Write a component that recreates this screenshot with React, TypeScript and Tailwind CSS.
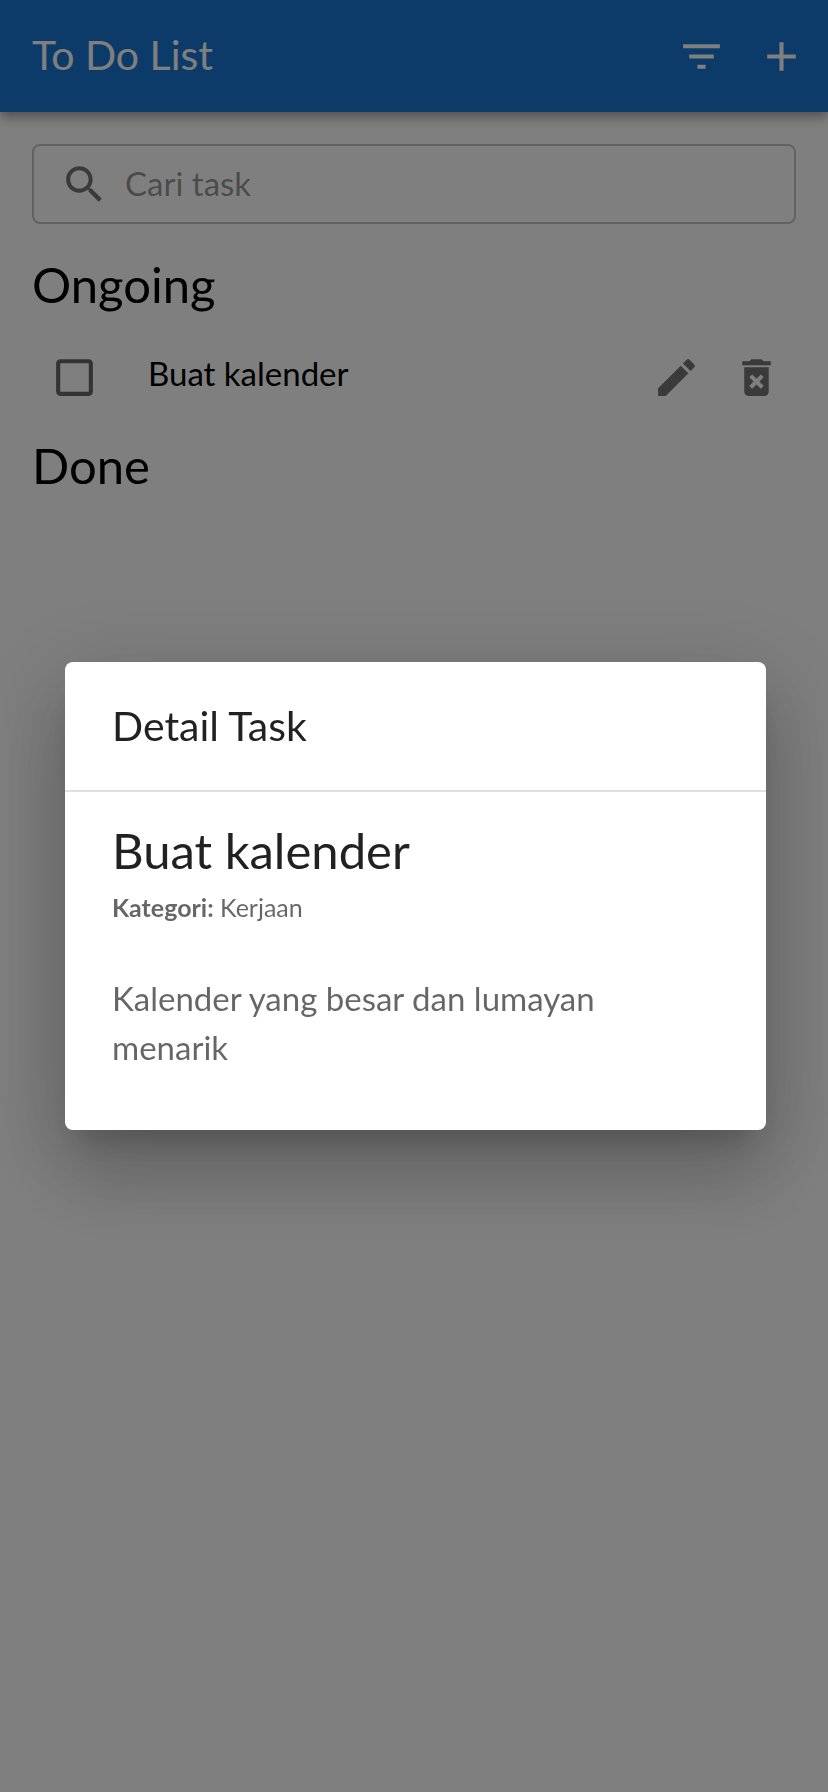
import { useState } from "react";

const icons = {
  filter: "M10 18h4v-2h-4v2zM3 6v2h18V6H3zm3 7h12v-2H6v2z",
  add: "M19 13h-6v6h-2v-6H5v-2h6V5h2v6h6v2z",
  search:
    "M15.5 14h-.79l-.28-.27C15.41 12.59 16 11.11 16 9.5 16 5.91 13.09 3 9.5 3S3 5.91 3 9.5 5.91 16 9.5 16c1.61 0 3.09-.59 4.23-1.57l.27.28v.79l5 4.99L20.49 19l-4.99-5zm-6 0C7.01 14 5 11.99 5 9.5S7.01 5 9.5 5 14 7.01 14 9.5 11.99 14 9.5 14z",
  unchecked:
    "M19 5v14H5V5h14m0-2H5c-1.1 0-2 .9-2 2v14c0 1.1.9 2 2 2h14c1.1 0 2-.9 2-2V5c0-1.1-.9-2-2-2z",
  checked:
    "M19 3H5c-1.11 0-2 .9-2 2v14c0 1.1.89 2 2 2h14c1.11 0 2-.9 2-2V5c0-1.1-.89-2-2-2zm-9 14l-5-5 1.41-1.41L10 14.17l7.59-7.59L19 8l-9 9z",
  edit: "M3 17.25V21h3.75L17.81 9.94l-3.75-3.75L3 17.25zM20.71 7.04c.39-.39.39-1.02 0-1.41l-2.34-2.34c-.39-.39-1.02-.39-1.41 0l-1.83 1.83 3.75 3.75 1.83-1.83z",
  remove:
    "M6 19c0 1.1.9 2 2 2h8c1.1 0 2-.9 2-2V7H6v12zm2.46-7.12 1.41-1.41L12 12.59l2.12-2.12 1.41 1.41L13.41 14l2.12 2.12-1.41 1.41L12 15.41l-2.12 2.12-1.41-1.41L10.59 14l-2.13-2.12zM15.5 4l-1-1h-5l-1 1H5v2h14V4z",
};

function Icon({ name, className = "" }: { name: keyof typeof icons; className?: string }) {
  return (
    <svg viewBox="0 0 24 24" fill="currentColor" aria-hidden="true" className={`size-[49px] shrink-0 ${className}`}>
      <path d={icons[name]} />
    </svg>
  );
}

function IconButton({ name, label }: { name: keyof typeof icons; label: string }) {
  return (
    <button type="button" aria-label={label} className="flex size-20 items-center justify-center rounded-full">
      <Icon name={name} />
    </button>
  );
}

export default function App() {
  const [query, setQuery] = useState("");
  const [done, setDone] = useState(false);

  return (
    <div className="min-h-screen bg-white font-['Lato',sans-serif] text-[33px] leading-[49px] text-black">
      <header className="flex h-28 items-center justify-between bg-[#1976d2] pl-8 pr-[7px] text-white shadow-[0_4px_8px_-2px_rgba(0,0,0,0.2),0_8px_10px_0_rgba(0,0,0,0.14),0_2px_20px_0_rgba(0,0,0,0.12)]">
        <h1 className="pb-1 text-[41px]">To Do List</h1>
        <div className="flex">
          <IconButton name="filter" label="Filter" />
          <IconButton name="add" label="Tambah task" />
        </div>
      </header>

      <main className="px-8 pt-8">
        <div className="flex h-20 items-center gap-4 rounded-lg border-2 border-black/23 pl-[26px] pr-7">
          <Icon name="search" className="text-black/54" />
          <input
            type="text"
            aria-label="Cari task"
            placeholder="Cari task"
            value={query}
            onChange={(e) => setQuery(e.target.value)}
            className="w-full min-w-0 bg-transparent pb-0.5 outline-none placeholder:text-black/42"
          />
        </div>

        <section>
          <h2 className="pt-7 text-[49px] leading-[65px]">Ongoing</h2>
          <ul>
            <li className="flex h-[116px] items-center pt-1">
              <label className="flex flex-1 items-center">
                <input
                  type="checkbox"
                  checked={done}
                  onChange={(e) => setDone(e.target.checked)}
                  className="sr-only"
                />
                <span className="flex size-[84px] items-center justify-center text-black/60">
                  <Icon name={done ? "checked" : "unchecked"} />
                </span>
                <span className="pb-2 pl-8">Buat kalender</span>
              </label>
              <div className="flex text-black/54">
                <IconButton name="edit" label="Edit task" />
                <IconButton name="remove" label="Hapus task" />
              </div>
            </li>
          </ul>
        </section>

        <section>
          <h2 className="text-[49px] leading-[65px]">Done</h2>
        </section>
      </main>

      <div className="fixed inset-0 flex items-center justify-center bg-black/50 pl-[65px] pr-[62px]">
        <div
          role="dialog"
          aria-modal="true"
          aria-labelledby="detail-title"
          className="w-full rounded-lg bg-white text-black/87 shadow-[0_22px_30px_-14px_rgba(0,0,0,0.2),0_48px_76px_6px_rgba(0,0,0,0.14),0_18px_92px_16px_rgba(0,0,0,0.12)]"
        >
          <h2 id="detail-title" className="px-[47px] py-8 text-[41px] leading-[64px]">
            Detail Task
          </h2>
          <div className="border-t-2 border-black/12 px-[47px] pb-[58px] pt-[26px]">
            <h3 className="text-[49px] leading-[65px]">Buat kalender</h3>
            <p className="text-[25px] leading-[49px] text-black/60">
              <strong className="font-bold">Kategori:</strong> Kerjaan
            </p>
            <p className="pt-[42px] text-black/60">Kalender yang besar dan lumayan menarik</p>
          </div>
        </div>
      </div>
    </div>
  );
}
